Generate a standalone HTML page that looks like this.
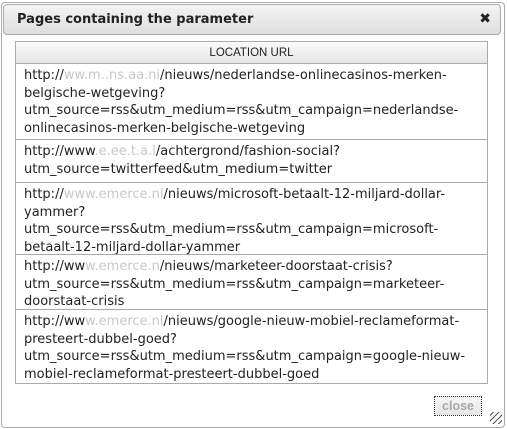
<!DOCTYPE html>
<html><head><style>
body{margin:0;width:507px;height:429px;background:#fff;position:relative;overflow:hidden;font-family:"DejaVu Sans","Liberation Sans",sans-serif}
.dlg{position:absolute;left:1px;top:2px;width:502px;height:424px;border:1px solid #aaa;border-radius:4px;background:#fff}
.tb{position:absolute;left:3px;top:4px;width:496px;height:29px;border:1px solid #aaa;border-radius:4px;background:linear-gradient(#f4f4f4,#dedede)}
.tb span{position:absolute;left:13px;top:7px;font-weight:bold;font-size:13px;color:#222}
.x{position:absolute;right:9px;top:6px;font-size:14px;font-weight:bold;color:#222}
.tbl{position:absolute;left:15px;top:41px;width:471px;border:1px solid #aaa;border-collapse:collapse}
.hd{height:21px;background:linear-gradient(#fafafa,#e6e6e6);font-family:"Liberation Sans",sans-serif;font-size:11.5px;text-align:center;line-height:22px;color:#222;border-bottom:1px solid #aaa}
.r{border-top:1px solid #aaa;padding:3px 8px 0 8px;font-size:13px;line-height:17.6px;color:#222;box-sizing:border-box;overflow:hidden}
.b{color:#c8c8c8}
.close{position:absolute;left:434px;top:396px;width:46px;height:18px;border:1px dotted #333;background:linear-gradient(#f8f8f8,#e6e6e6);font-family:"Liberation Sans",sans-serif;font-size:12.5px;font-weight:bold;color:#aaa;text-align:center;line-height:18px}
.grip{position:absolute;left:490px;top:412px;width:12px;height:12px;background:repeating-linear-gradient(135deg,transparent 0 2px,#555 2px 3px,transparent 3px 4px)}
</style></head><body>
<div class="dlg"></div>
<div class="tb"><span>Pages containing the parameter</span><div class="x">✖</div></div>
<div class="tbl">
<div class="hd">LOCATION URL</div>
<div class="r" style="height:75px;border-top:0">http://<span class="b">ww.m..ns.aa.ni</span>/nieuws/nederlandse-onlinecasinos-merken-belgische-wetgeving?<br>utm_source=rss&amp;utm_medium=rss&amp;utm_campaign=nederlandse-onlinecasinos-merken-belgische-wetgeving</div>
<div class="r" style="height:43px">http://www<span class="b">.e.ee.t.a.l</span>/achtergrond/fashion-social?<br>utm_source=twitterfeed&amp;utm_medium=twitter</div>
<div class="r" style="height:72px">http://<span class="b">www.emerce.nl</span>/nieuws/microsoft-betaalt-12-miljard-dollar-yammer?<br>utm_source=rss&amp;utm_medium=rss&amp;utm_campaign=microsoft-betaalt-12-miljard-dollar-yammer</div>
<div class="r" style="height:55px">http://ww<span class="b">w.emerce.n</span>/nieuws/marketeer-doorstaat-crisis?<br>utm_source=rss&amp;utm_medium=rss&amp;utm_campaign=marketeer-doorstaat-crisis</div>
<div class="r" style="height:74px">http://ww<span class="b">w.emerce.nl</span>/nieuws/google-nieuw-mobiel-reclameformat-presteert-dubbel-goed?<br>utm_source=rss&amp;utm_medium=rss&amp;utm_campaign=google-nieuw-mobiel-reclameformat-presteert-dubbel-goed</div>
</div>
<div class="close">close</div>
<div class="grip"></div>
</body></html>
